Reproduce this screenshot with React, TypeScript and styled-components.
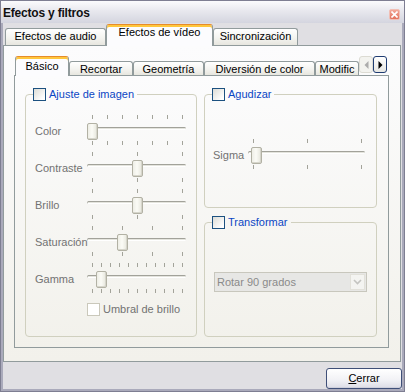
import styled, { createGlobalStyle, css } from "styled-components";

const GlobalStyle = createGlobalStyle`
  html, body {
    margin: 0;
    padding: 0;
    background: #ffffff;
  }
  body {
    font-family: "Liberation Sans", Arial, sans-serif;
    font-size: 11px;
    line-height: 13px;
    color: #000;
  }
  * {
    box-sizing: border-box;
  }
`;

const Window = styled.div`
  width: 405px;
  height: 392px;
  display: flex;
  flex-direction: column;
  background: #e0dfe3;
  border: 1px solid #7e7e92;
  box-shadow: inset 2px 0 #aaaabb, inset -2px 0 #aaaabb, inset 0 -2px #aaaabb;
  overflow: hidden;
`;

const TitleBar = styled.div`
  flex: none;
  height: 22px;
  display: flex;
  align-items: center;
  justify-content: space-between;
  padding: 2px 4px 0 2px;
  background: linear-gradient(#fbfbfd, #e8e8ee 45%, #d4d5df);
`;

const Caption = styled.span`
  font-size: 12px;
  font-weight: bold;
  letter-spacing: -0.2px;
  color: #111;
`;

const CloseButton = styled.span`
  width: 11px;
  height: 11px;
  margin-top: 2px;
  border-radius: 2px;
  border: 1px solid #f1beb4;
  background: linear-gradient(#f3a898, #e2725c);
  display: flex;
  align-items: center;
  justify-content: center;
`;

const Body = styled.div`
  flex: 1;
  display: flex;
  flex-direction: column;
  padding: 1px 2px 1px 2px;
`;

const TabBar = styled.div<{ $h: number }>`
  flex: none;
  height: ${(p) => p.$h}px;
  margin-bottom: -1px;
  position: relative;
  z-index: 1;
  display: flex;
  align-items: flex-end;
`;

const TabStrip = styled.div<{ $indent: number }>`
  flex: 1;
  height: 100%;
  display: flex;
  align-items: flex-end;
  overflow: hidden;
  padding-left: ${(p) => p.$indent}px;
`;

const Tab = styled.div<{ $w: number; $h: number; $pt: number; $active?: boolean }>`
  flex: none;
  width: ${(p) => p.$w}px;
  height: ${(p) => p.$h}px;
  padding-top: ${(p) => p.$pt}px;
  display: flex;
  justify-content: center;
  white-space: nowrap;
  border: 1px solid #919b9c;
  border-bottom: none;
  border-radius: 3px 3px 0 0;
  margin-bottom: 1px;
  background: linear-gradient(#ffffff, #f4f4f0 55%, #e7e6df);
  ${(p) =>
    p.$active &&
    css`
      margin-bottom: 0;
      background: #fcfcfe;
      border-top: 1px solid #e68b2c;
      box-shadow: inset 0 2px #ffc73c;
    `}
`;

const Pane = styled.div<{ $h: number }>`
  flex: none;
  height: ${(p) => p.$h}px;
  border: 1px solid #919b9c;
  background: linear-gradient(#fcfcfd, #f2f1eb);
`;

const OuterPane = styled(Pane)`
  margin-right: 1px;
  padding: 10px 11px 13px 10px;
  display: flex;
  flex-direction: column;
`;

const InnerPane = styled(Pane)`
  display: flex;
  gap: 7px;
  padding: 12px 11px 10px 10px;
`;

const Scroller = styled.div`
  flex: none;
  align-self: flex-start;
  display: flex;
  margin-right: 2px;
`;

const ScrollButton = styled.div<{ $enabled?: boolean }>`
  width: 14px;
  height: 17px;
  border-radius: 3px;
  display: flex;
  align-items: center;
  justify-content: center;
  border: 1px solid ${(p) => (p.$enabled ? "#1f3c72" : "#dcdbd3")};
  background: ${(p) => (p.$enabled ? "linear-gradient(#ffffff, #e6e6e2)" : "#f3f3ef")};
`;

const Group = styled.fieldset<{ $w?: number; $h?: number }>`
  margin: 0;
  padding: 0;
  min-width: 0;
  border: 1px solid #d0d0bf;
  border-radius: 4px;
  ${(p) => p.$w && `width: ${p.$w}px; flex: none;`}
  ${(p) => (p.$h ? `height: ${p.$h}px; flex: none;` : "flex: 1;")}
`;

const Legend = styled.legend`
  margin-left: 7px;
  padding: 0 3px 0 0;
  height: 13px;
  display: flex;
  align-items: center;
  gap: 3px;
  color: #0b46c4;
`;

const Check = styled.span<{ $disabled?: boolean }>`
  flex: none;
  width: 13px;
  height: 13px;
  border: 1px solid ${(p) => (p.$disabled ? "#cac8bb" : "#1c5180")};
  background: ${(p) =>
    p.$disabled ? "#ffffff" : "linear-gradient(135deg, #dcdcd6, #ffffff 85%)"};
`;

const RightColumn = styled.div`
  width: 173px;
  flex: none;
  display: flex;
  flex-direction: column;
  gap: 8px;
`;

const GroupContent = styled.div<{ $pt: number; $pl: number; $gap?: number }>`
  display: flex;
  flex-direction: column;
  gap: ${(p) => p.$gap ?? 0}px;
  padding: ${(p) => p.$pt}px 0 0 ${(p) => p.$pl}px;
`;

const SliderRow = styled.div`
  display: flex;
  align-items: center;
  height: 31px;
`;

const RowLabel = styled.span<{ $w: number }>`
  width: ${(p) => p.$w}px;
  flex: none;
  padding-top: 2px;
  color: #727272;
`;

const SliderBox = styled.div<{ $w: number }>`
  width: ${(p) => p.$w}px;
  height: 31px;
  flex: none;
  display: flex;
  flex-direction: column;
`;

const TickRow = styled.div`
  height: 4px;
  padding: 0 5px;
  display: flex;
  justify-content: space-between;
`;

const Tick = styled.span`
  width: 1px;
  height: 4px;
  background: #a3a39a;
`;

const Channel = styled.div`
  height: 22px;
  position: relative;
`;

const Groove = styled.div`
  position: absolute;
  left: 0;
  right: 2px;
  top: 8px;
  height: 3px;
  border-radius: 2px;
  border-top: 1px solid #a2a29a;
  border-left: 1px solid #b8b8b0;
  border-bottom: 1px solid #ffffff;
  background: #e4e4dd;
`;

const Thumb = styled.div`
  position: absolute;
  top: 4px;
  width: 11px;
  height: 17px;
  border: 1px solid #b2b1a4;
  border-radius: 2px;
  background: linear-gradient(90deg, #eeeee6, #fbfbf6 45%, #e6e6dc);
  box-shadow: inset -1px -1px #d6d5cb;
`;

const OptionRow = styled.div`
  display: flex;
  align-items: center;
  gap: 3px;
  margin-top: 9px;
  padding-left: 61px;
  color: #727272;
`;

const Combo = styled.div`
  width: 153px;
  height: 20px;
  display: flex;
  align-items: center;
  border: 1px solid #c8c7bd;
  background: #e7e7e5;
  color: #8a8a8a;
`;

const ComboText = styled.span`
  flex: 1;
  padding-left: 2px;
`;

const ComboButton = styled.span`
  width: 15px;
  height: 16px;
  margin-right: 1px;
  display: flex;
  align-items: center;
  justify-content: center;
  border: 1px solid #e2e1da;
  background: #f4f4f1;
`;

const Footer = styled.div`
  flex: 1;
  display: flex;
  justify-content: flex-end;
  align-items: flex-start;
  padding-top: 6px;
`;

const PushButton = styled.button`
  width: 76px;
  height: 21px;
  padding: 0;
  font: inherit;
  color: #000;
  border: 1px solid #3f4f78;
  border-radius: 3px;
  background: linear-gradient(#ffffff, #f1f1f5 60%, #dcdce6);
  box-shadow: inset 0 -1px #cfd0dc;
`;

interface ISliderProps {
  ticks: number;
  value: number;
  width: number;
}

function Slider({ ticks, value, width }: ISliderProps) {
  const marks = Array.from({ length: ticks }, (_, i) => <Tick key={i} />);
  return (
    <SliderBox $w={width}>
      <TickRow>{marks}</TickRow>
      <Channel>
        <Groove />
        <Thumb style={{ left: Math.round(value * (width - 11)) }} />
      </Channel>
      <TickRow>{marks}</TickRow>
    </SliderBox>
  );
}

const adjustments = [
  { label: "Color", ticks: 7, value: 0 },
  { label: "Contraste", ticks: 3, value: 0.5 },
  { label: "Brillo", ticks: 3, value: 0.5 },
  { label: "Saturación", ticks: 4, value: 1 / 3 },
  { label: "Gamma", ticks: 11, value: 0.1 },
];

const outerTabs = [
  { text: "Efectos de audio", w: 101 },
  { text: "Efectos de vídeo", w: 107, active: true },
  { text: "Sincronización", w: 85 },
];

// last tab runs into the scroll arrows
const innerTabs = [
  { text: "Básico", w: 54, active: true },
  { text: "Recortar", w: 64 },
  { text: "Geometría", w: 71 },
  { text: "Diversión de color", w: 111 },
  { text: "Modific", w: 44 },
];

export default function App() {
  return (
    <>
      <GlobalStyle />
      <Window>
        <TitleBar>
          <Caption>Efectos y filtros</Caption>
          <CloseButton>
            <svg width="7" height="7" viewBox="0 0 7 7">
              <path d="M0.5 0.5 L6.5 6.5 M6.5 0.5 L0.5 6.5" stroke="#fff" strokeWidth="1.6" />
            </svg>
          </CloseButton>
        </TitleBar>

        <Body>
          <TabBar $h={22}>
            <TabStrip $indent={2}>
              {outerTabs.map((t) => (
                <Tab key={t.text} $w={t.w} $h={t.active ? 22 : 17} $pt={1} $active={t.active}>
                  {t.text}
                </Tab>
              ))}
            </TabStrip>
          </TabBar>

          <OuterPane $h={317}>
            <TabBar $h={20}>
              <TabStrip $indent={1}>
                {innerTabs.map((t) => (
                  <Tab
                    key={t.text}
                    $w={t.w}
                    $h={t.active ? 20 : 14}
                    $pt={t.active ? 3 : 1}
                    $active={t.active}
                  >
                    {t.text}
                  </Tab>
                ))}
              </TabStrip>
              <Scroller>
                <ScrollButton>
                  <svg width="5" height="8" viewBox="0 0 5 8">
                    <path d="M4.5 0 L0.5 4 L4.5 8 Z" fill="#acacac" />
                  </svg>
                </ScrollButton>
                <ScrollButton $enabled>
                  <svg width="5" height="8" viewBox="0 0 5 8">
                    <path d="M0.5 0 L4.5 4 L0.5 8 Z" fill="#000" />
                  </svg>
                </ScrollButton>
              </Scroller>
            </TabBar>

            <InnerPane $h={273}>
              <Group $w={172}>
                <Legend>
                  <Check />
                  Ajuste de imagen
                </Legend>
                <GroupContent $pt={14} $pl={9} $gap={6}>
                  {adjustments.map((a) => (
                    <SliderRow key={a.label}>
                      <RowLabel $w={52}>{a.label}</RowLabel>
                      <Slider ticks={a.ticks} value={a.value} width={101} />
                    </SliderRow>
                  ))}
                </GroupContent>
                <OptionRow>
                  <Check $disabled />
                  Umbral de brillo
                </OptionRow>
              </Group>

              <RightColumn>
                <Group $h={120}>
                  <Legend>
                    <Check />
                    Agudizar
                  </Legend>
                  <GroupContent $pt={38} $pl={8}>
                    <SliderRow>
                      <RowLabel $w={35}>Sigma</RowLabel>
                      <Slider ticks={3} value={0.03} width={119} />
                    </SliderRow>
                  </GroupContent>
                </Group>

                <Group>
                  <Legend>
                    <Check />
                    Transformar
                  </Legend>
                  <GroupContent $pt={43} $pl={9}>
                    <Combo>
                      <ComboText>Rotar 90 grados</ComboText>
                      <ComboButton>
                        <svg width="9" height="6" viewBox="0 0 9 6">
                          <path d="M1 1 L4.5 4.5 L8 1" stroke="#c4c4c0" strokeWidth="1.6" fill="none" />
                        </svg>
                      </ComboButton>
                    </Combo>
                  </GroupContent>
                </Group>
              </RightColumn>
            </InnerPane>
          </OuterPane>

          <Footer>
            <PushButton>
              <u>C</u>errar
            </PushButton>
          </Footer>
        </Body>
      </Window>
    </>
  );
}
